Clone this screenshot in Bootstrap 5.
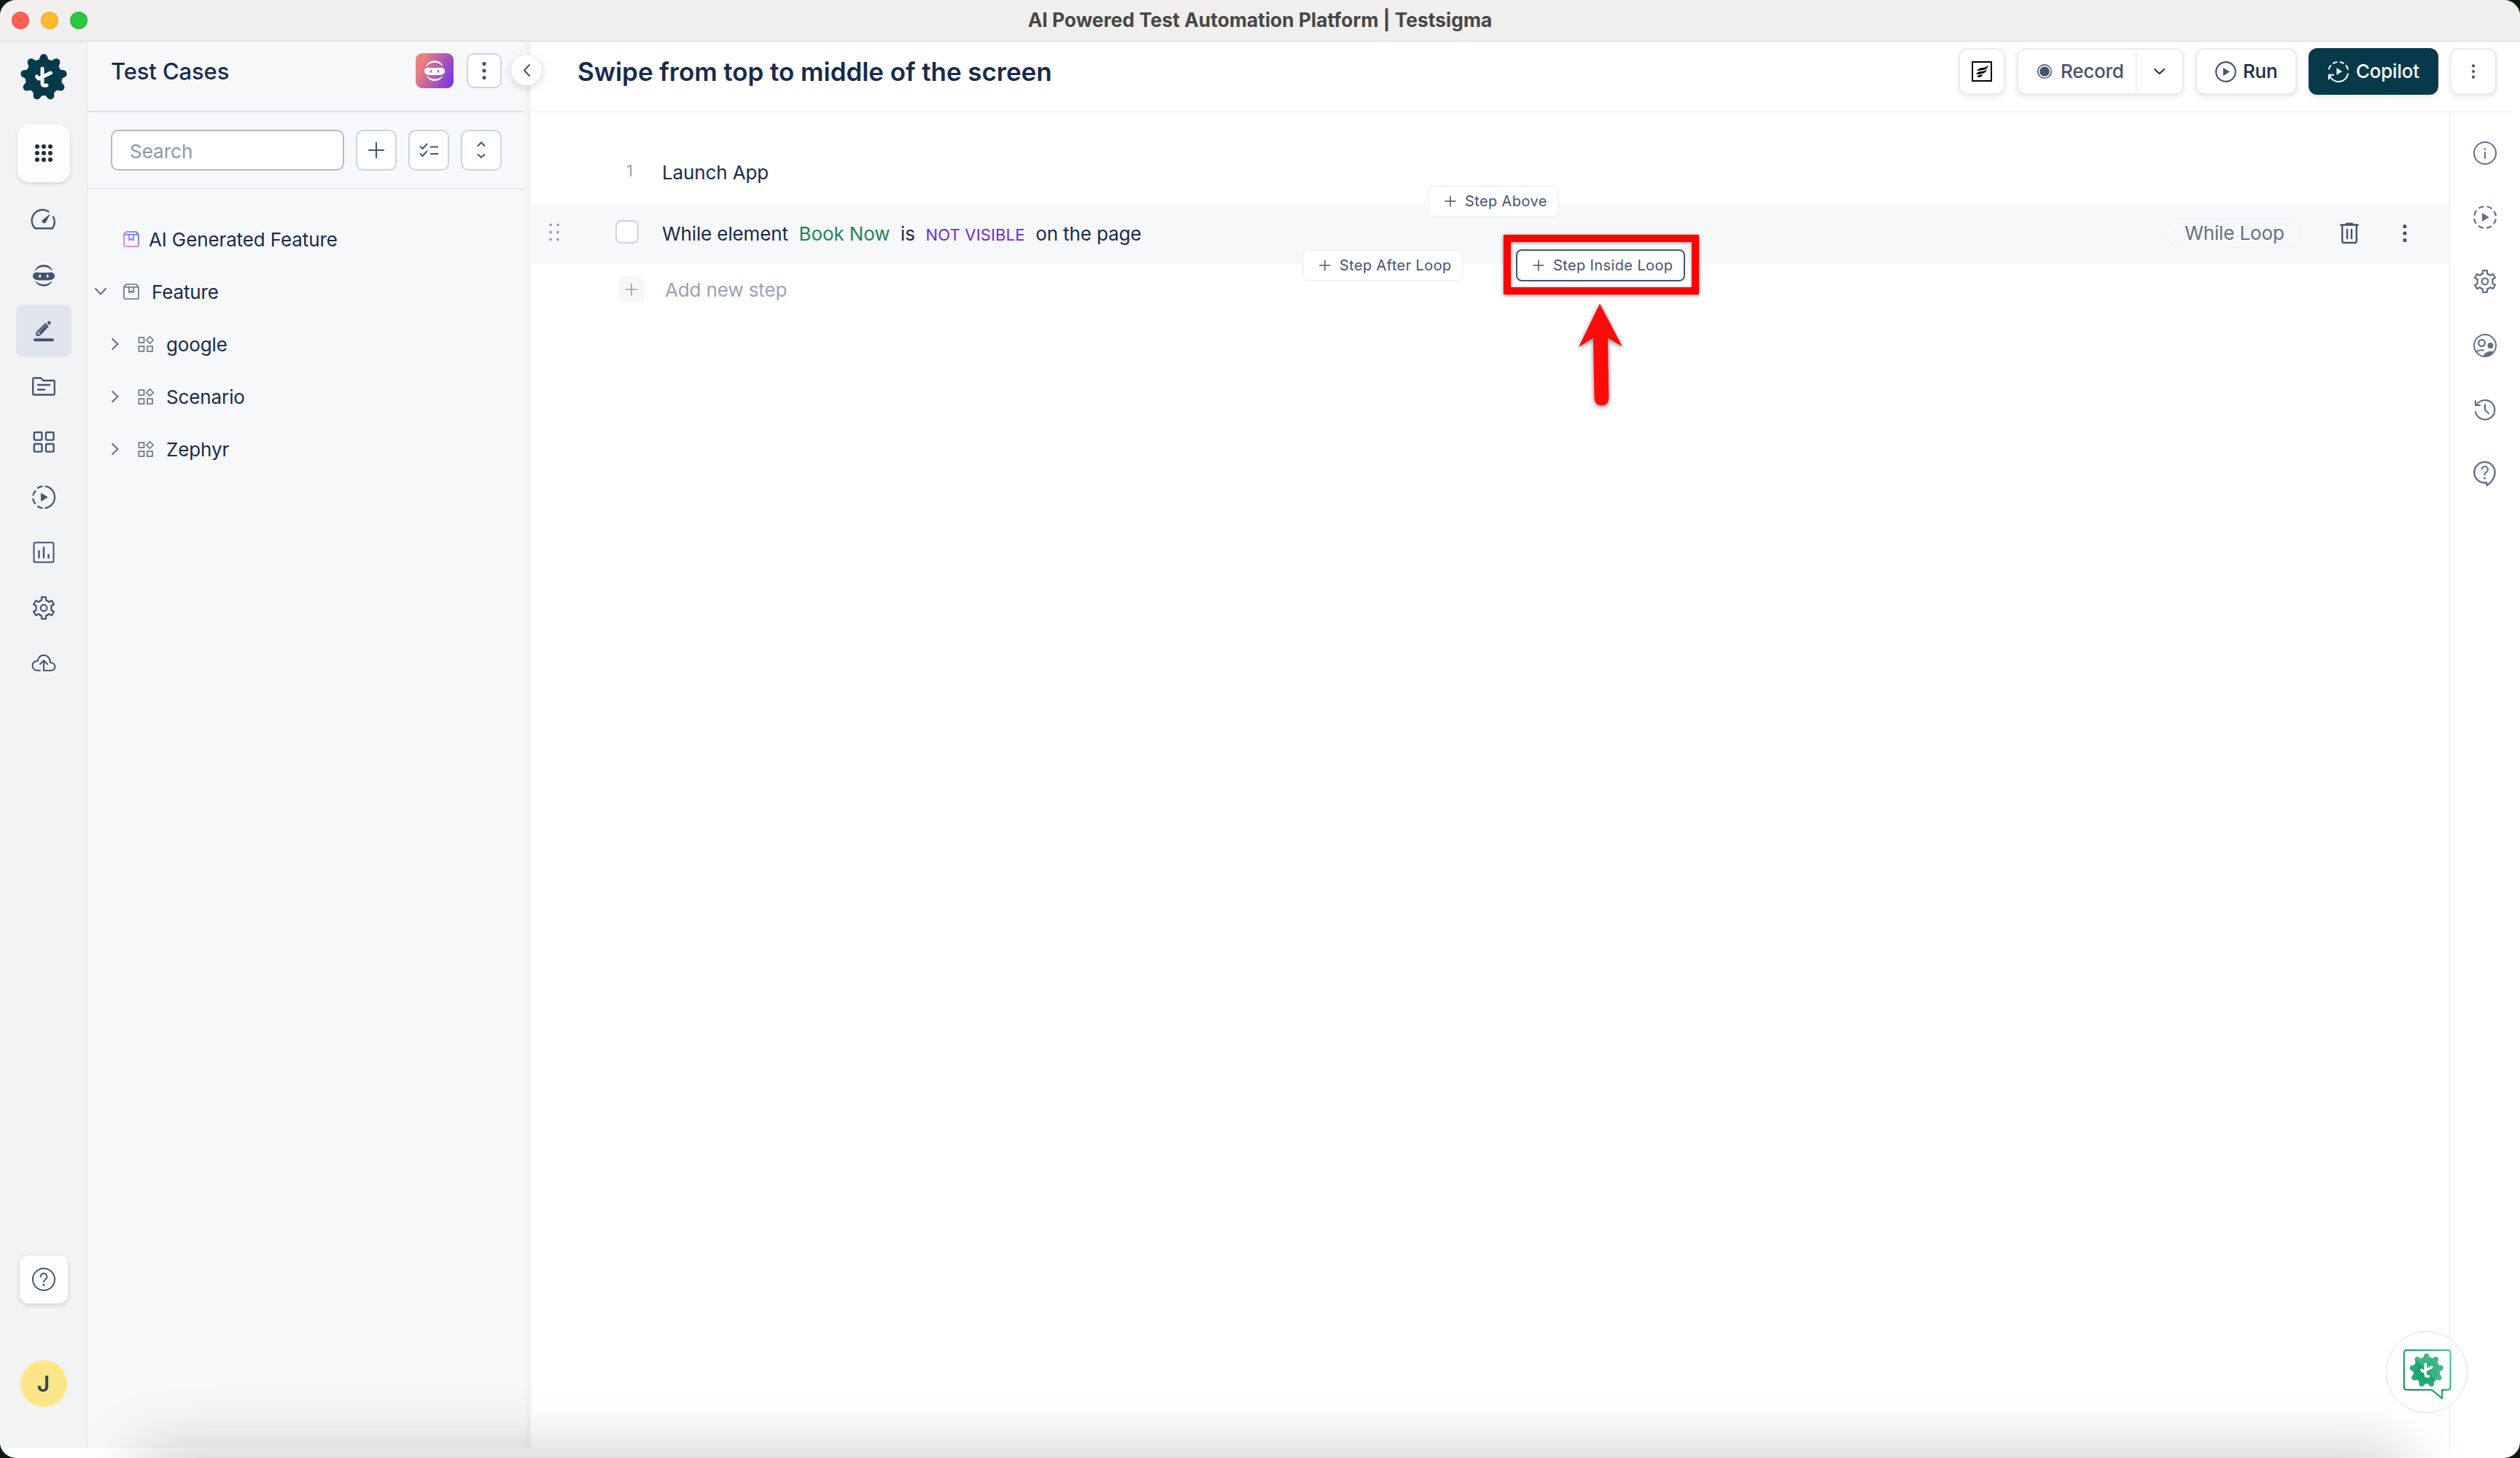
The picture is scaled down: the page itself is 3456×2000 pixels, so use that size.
<!DOCTYPE html>
<html lang="en">
<head>
<meta charset="utf-8">
<title>AI Powered Test Automation Platform | Testsigma</title>
<link href="https://cdn.jsdelivr.net/npm/bootstrap@5.3.0/dist/css/bootstrap.min.css" rel="stylesheet">
<script src="https://cdn.jsdelivr.net/npm/bootstrap@5.3.0/dist/js/bootstrap.bundle.min.js"></script>
<style>
html,body{height:2000px;width:3456px;overflow:hidden}
body{background:#0d1a10;font-family:Inter,"Liberation Sans",sans-serif;font-size:26px;line-height:36px;letter-spacing:-.12px;color:#172b4d}
svg{display:block;flex:none;overflow:visible}
.ln{fill:none;stroke:currentColor;stroke-linecap:round;stroke-linejoin:round}
.ln:not([stroke-width]){stroke-width:2}
.window{width:3456px;height:2000px;border-radius:22px;background:#fff}
.titlebar{height:57px;background:#f0efed;border-bottom:1px solid #d3d3d3;padding-left:16px;gap:16px}
.tl{width:24px;height:24px;border-radius:50%;border:1px solid rgba(0,0,0,.12)}
.tl-close{background:#ff5f57}.tl-min{background:#febc2e}.tl-max{background:#28c840}
.wtitle{left:0;right:0;top:0;line-height:54px;text-align:center;font-weight:700;font-size:26.4px;letter-spacing:0;color:#474747}
.app{height:1929px}
.rail{width:120px;background:#f2f3f5;border-right:1px solid #e3e5e8;color:#44546f;padding-top:17px}
.gridbtn{width:72px;height:80px;border-radius:16px;background:#fcfefd;box-shadow:0 2px 5px rgba(0,0,0,.14);margin:32px 0 14px;color:#222b37}
.ritem{width:76px;height:72px;margin:2px 0;border-radius:10px}
.ritem.on{background:#e0e4ec}
.helpbtn{width:66px;height:66px;border-radius:12px;background:#fcfefd;box-shadow:0 2px 6px rgba(0,0,0,.16);margin-bottom:78px}
.avatar{width:64px;height:64px;border-radius:50%;background:#fde68a;color:#374151;font-weight:600;font-size:30px;margin-bottom:56px}
.side{width:608px;background:#f7f8fa;border-right:8px solid #f2f3f5}
.shead{height:97px;border-bottom:2px solid #e0e3ea;padding:0 32px 15px 32px}
.shead h1{font-size:31px;font-weight:500;margin:0;line-height:40px;padding-top:2px}
.aibtn{width:52px;height:48px;border-radius:9px;background:linear-gradient(115deg,#ec8080 18%,#7a38dd 92%);color:#fff;margin-right:18px}
.sq{width:48px;height:48px;border:2px solid #cbd5e1;border-radius:10px;background:#fff;color:#44546f}
.sq56{width:56px;height:56px}
.stools{height:106px;border-bottom:2px solid #e5e7ea;padding:0 32px;gap:16px}
.search{width:320px;height:56px;border:2px solid #b3b9c4;border-radius:10px;padding:2px 24px 0;font-size:26px;color:#172b4d;background:#fff}
.search::placeholder{color:#8a97ab;opacity:1}
.collapser{left:700px;top:74px;width:44px;height:44px;border-radius:50%;background:#fff;border:1px solid #e5e7eb;box-shadow:0 4px 12px rgba(0,0,0,.12);color:#44546f}
.tree{padding-top:32px;color:#172b4d}
.trow{height:72px}
.trow svg{color:#626f86}
.trow span,.strow .txt{padding-top:2px}
.trow.lvl1{padding-left:33px}
.lvl1 svg+svg{margin-left:26px}
.lvl1 span{margin-left:17px}
.mhead{height:97px;border-bottom:1px solid #e5e7eb;margin-right:12px;padding:0 20px 14px 64px}
.mhead h2{font-size:35px;font-weight:600;margin:0;line-height:44px;letter-spacing:-.06px}
.tb{height:64px;border:2px solid #e9ebf1;border-radius:12px;background:#fff;color:#44546f;font-weight:500;letter-spacing:-.25px;box-shadow:0 3px 7px rgba(20,30,60,.10)}
.tb.dark{background:#063a4a;border-color:#063a4a;color:#fff}
.tb-sq{width:64px}.tb-rec{width:229px}.tb-run{width:139px}.tb-cop{width:178px}
.vsep{width:1px;height:56px;background:#e2e5ec}
.steps{width:2631px;padding-top:40px}
.strow{height:84px}
.strow.hov{background:#f7f8fa}
.num{width:180px;font-size:22px;color:#97a3b5;padding:0 0 4px 131px}
.phrase{margin-left:32px;gap:14.7px}
.elem{color:#1f845a}
.cond{color:#7126d9;font-size:22px;letter-spacing:.15px}
.cb{width:32px;height:32px;border:2px solid #cdd2da;border-radius:8px;background:#fff;margin-bottom:4px}
.addrow{padding:16px 0 0 120px;color:#97a3b5}
.addrow>span+span{margin-left:28px;padding-top:2px}
.addbox{width:36px;height:36px;background:#f7f7f7;border-radius:8px}
.pill{width:185px;height:40px;border:1px solid #f1f3f6;border-radius:20px;color:#626f86;padding-left:2px}
.chip{height:44px;border:2px solid #f2f3f5;border-radius:8px;background:#fff;color:#44546f;font-size:20px;letter-spacing:.38px;white-space:nowrap;padding-left:21px;gap:12px}
.chip.act{border-color:#44546f}
.chip-above{left:1958px;top:254px;width:180px}
.chip-after{left:1786px;top:342px;width:221px}
.chip-inside{left:2079px;top:342px;width:232px}
.redbox{left:2062px;top:322px;width:268px;height:82px;border:10px solid #f00;box-shadow:0 1px 5px rgba(0,0,0,.5),inset 0 1px 4px rgba(0,0,0,.4)}
.redarrow{left:2155px;top:410px;filter:drop-shadow(0 2px 3px rgba(0,0,0,.5))}
.rbar{width:97px;border-left:1px solid #e5e7eb;color:#626f86;padding-top:40px}
.rbar>svg{margin-bottom:56px}
.glow{left:0;right:0;bottom:0;height:140px;overflow:hidden;border-radius:0 0 22px 22px;pointer-events:none}
.glow i{position:absolute;left:200px;right:170px;top:145px;height:60px;box-shadow:0 0 90px 10px rgba(0,0,0,.23)}
.chat{left:3272px;top:1826px}
</style>
</head>
<body>
<svg width="0" height="0" class="position-absolute">
<defs>
<linearGradient id="pk" x1="0" y1="1" x2="1" y2="0"><stop offset="0" stop-color="#ff6be6"/><stop offset=".5" stop-color="#a06bff"/><stop offset="1" stop-color="#2f6bff"/></linearGradient>
<linearGradient id="gr" x1="0" y1="1" x2="1" y2="0"><stop offset="0" stop-color="#0b6b4a"/><stop offset=".5" stop-color="#0c9c68"/><stop offset="1" stop-color="#3fc48c"/></linearGradient>
<linearGradient id="cg" gradientUnits="userSpaceOnUse" x1="36" y1="74" x2="76" y2="34"><stop offset="0" stop-color="#0a6b48"/><stop offset=".5" stop-color="#0e9e68"/><stop offset=".52" stop-color="#2ba877"/><stop offset="1" stop-color="#4cba8c"/></linearGradient>
<g id="cog"><circle cx="32" cy="32" r="25"/><path id="lobe" d="M22.600 8.600C26 8.500 26.200 6.500 26.800 4.500C27.500 1.500 29.500 0 32 0S36.500 1.500 37.200 4.500C37.800 6.500 38 8.500 41.400 8.600L32 32Z"/><use href="#lobe" transform="rotate(40 32 32)"/><use href="#lobe" transform="rotate(80 32 32)"/><use href="#lobe" transform="rotate(120 32 32)"/><use href="#lobe" transform="rotate(160 32 32)"/><use href="#lobe" transform="rotate(200 32 32)"/><use href="#lobe" transform="rotate(240 32 32)"/><use href="#lobe" transform="rotate(280 32 32)"/><use href="#lobe" transform="rotate(320 32 32)"/></g>
<clipPath id="cogclip"><circle cx="32" cy="32" r="31"/></clipPath>
<g id="tmark"><path d="M30 20V40.500Q30 44 36 43M22.500 31L25 34L41.500 26" fill="none" stroke="#fff" stroke-width="5" stroke-linecap="round" stroke-linejoin="round"/></g>
<symbol id="bot" viewBox="0 0 32 32"><path d="M3.500 10C5.500 4.500 10 1.300 16 1.300S26.500 4.500 28.500 10Q23 4 16 4T3.500 10ZM4 22.800Q9 28 16 28T28 22.800C26 27.700 22 30.700 16 30.700S6 27.700 4 22.800Z" fill="currentColor"/><path fill-rule="evenodd" fill="currentColor" d="M5.500 11.500Q16 12.500 26.500 11.500Q31 12.500 31 16.500T26 22Q16 23 6 22Q1 20.500 1 16.500T5.500 11.500ZM10.800 14.600a1.400 2.200 0 1 0 .01 0ZM21.200 14.600a1.400 2.200 0 1 0 .01 0Z"/></symbol>
<symbol id="kebab" viewBox="0 0 32 32"><g fill="currentColor"><circle cx="16" cy="6.500" r="2.600"/><circle cx="16" cy="16" r="2.600"/><circle cx="16" cy="25.500" r="2.600"/></g></symbol>
<symbol id="gear" viewBox="0 0 32 32"><path class="ln" stroke-width="2.200" d="M13 1.200h6v4.200a11 11 0 0 1 4.200 2.500L26.800 5.800l3.200 5.200-3.800 2.300a11 11 0 0 1 0 5.400L30 21l-3.200 5.200-3.600-2.100a11 11 0 0 1-4.200 2.500v4.200h-6v-4.200a11 11 0 0 1-4.200-2.500L5.200 26.200 2 21l3.800-2.300a11 11 0 0 1 0-5.400L2 11l3.200-5.200 3.600 2.100A11 11 0 0 1 13 5.400Z"/><circle class="ln" stroke-width="2.200" cx="16" cy="16" r="4.300"/></symbol>
<symbol id="chr" viewBox="0 0 10 16"><path class="ln" d="M1.200 1l7.300 7-7.300 7"/></symbol>
<symbol id="book" viewBox="0 0 22 22"><path fill="none" stroke-width="1.600" stroke-linejoin="round" d="M1 5.500V19.500Q1 21 2.500 21H19.500Q21 21 21 19.500V5.500L18.500 1.500Q18 1 17 1H5Q4 1 3.500 1.500L1 4.800H21M8 5V12.500L11 10.500L14 12.500V5"/></symbol>
<symbol id="mods" viewBox="0 0 22 22"><g fill="none" stroke="currentColor" stroke-width="1.600"><rect x="1.500" y="2" width="7" height="7"/><rect x="1.500" y="14" width="7" height="7"/><rect x="13" y="14" width="7" height="7"/><path d="M16.500 .800l4.700 4.700-4.700 4.700-4.700-4.700Z"/></g></symbol>
<symbol id="plus" viewBox="0 0 16 16"><path d="M8 .500V15.500M.500 8H15.500" stroke="currentColor" stroke-width="1.500"/></symbol>
<symbol id="q" viewBox="0 0 32 32"><path class="ln" d="M11.600 12.300a4.400 4.400 0 1 1 6.700 3.700Q16 17.500 16 19.600"/><circle cx="16" cy="23.500" r="1.600" fill="currentColor"/></symbol>
</defs>
</svg>

<div class="window position-relative overflow-hidden">
  <div class="titlebar d-flex align-items-center">
    <span class="tl tl-close"></span><span class="tl tl-min"></span><span class="tl tl-max"></span>
    <div class="wtitle position-absolute">AI Powered Test Automation Platform | Testsigma</div>
  </div>

  <div class="app d-flex">
    <nav class="rail d-flex flex-column align-items-center flex-shrink-0">
      <svg width="64" height="64" fill="#063a4a"><use href="#cog"/><use href="#tmark"/></svg>
      <div class="gridbtn d-flex align-items-center justify-content-center"><svg width="24" height="24" fill="currentColor"><circle cx="3" cy="3" r="3"/><circle cx="12" cy="3" r="3"/><circle cx="21" cy="3" r="3"/><circle cx="3" cy="12" r="3"/><circle cx="12" cy="12" r="3"/><circle cx="21" cy="12" r="3"/><circle cx="3" cy="21" r="3"/><circle cx="12" cy="21" r="3"/><circle cx="21" cy="21" r="3"/></svg></div>
      <div class="ritem d-flex align-items-center justify-content-center"><svg width="32" height="32"><path class="ln" stroke-width="2.400" d="M22.500 4.200A14.800 14.800 0 0 0 4.200 27.300H27.800A15 15 0 0 0 29 11.500"/><path d="M24 8.500L18 19.500A2.800 2.800 0 0 1 14 16.500Z" fill="currentColor" stroke="currentColor" stroke-linejoin="round"/></svg></div>
      <div class="ritem d-flex align-items-center justify-content-center"><svg width="32" height="32"><use href="#bot"/></svg></div>
      <div class="ritem on d-flex align-items-center justify-content-center"><svg width="32" height="32"><path d="M4 28.300H28" stroke="currentColor" stroke-width="4" stroke-linecap="round"/><path class="ln" stroke-width="2.200" d="M18.300 6.500L21.500 9.700L11 20.800Q9 22.300 6.500 21.700Q6 19 7.500 17ZM18.500 10L10.500 18"/><path fill="currentColor" d="M20.500 4.500L23 2Q25.500 3 26 5L23.800 8Z"/></svg></div>
      <div class="ritem d-flex align-items-center justify-content-center"><svg width="32" height="32"><path class="ln" stroke-width="2.300" d="M1.200 6Q1.200 4.500 3 4.500H12L15.500 8H29Q30.800 8 30.800 9.500V26Q30.800 27.500 29 27.500H3Q1.200 27.500 1.200 26ZM8 14H24M8 20.500H17"/></svg></div>
      <div class="ritem d-flex align-items-center justify-content-center"><svg width="32" height="32"><g class="ln" stroke-width="2.400"><rect x="2.800" y="3" width="10.600" height="10.600" rx="1.500"/><rect x="19" y="3" width="10.600" height="10.600" rx="1.500"/><rect x="2.800" y="19" width="10.600" height="10.600" rx="1.500"/><rect x="19" y="19" width="10.600" height="10.600" rx="1.500"/></g></svg></div>
      <div class="ritem d-flex align-items-center justify-content-center"><svg width="32" height="32"><path class="ln" stroke-width="2.200" d="M18.500 1.200A15 15 0 0 1 18.500 30.800M13.500 1.200A15 15 0 0 0 8 3.300M4.500 7.500A15 15 0 0 0 1.500 13M1.300 18.500A15 15 0 0 0 4 24.500M8 28.700A15 15 0 0 0 13.500 30.800"/><path d="M12.500 10.800V21.200L21 16Z" fill="currentColor" stroke="currentColor" stroke-linejoin="round"/></svg></div>
      <div class="ritem d-flex align-items-center justify-content-center"><svg width="32" height="32"><rect class="ln" x="2.500" y="2.300" width="27" height="27" rx="2"/><path class="ln" stroke-width="2.400" d="M9.500 14V23M16 9V23M22.500 19V23"/></svg></div>
      <div class="ritem d-flex align-items-center justify-content-center"><svg width="32" height="32"><use href="#gear"/></svg></div>
      <div class="ritem d-flex align-items-center justify-content-center"><svg width="32" height="32"><path class="ln" d="M11 25.800H8C3 25.800 .500 22.500 .500 19S3.500 13 8 12.500C8 8 11.500 4.800 16 4.800S25 8.500 25 15C29 15 31.500 17.500 31.500 20.500S29 25.800 26 25.800H16V12.500M11 17L16 12L21 17"/></svg></div>
      <div class="helpbtn mt-auto d-flex align-items-center justify-content-center flex-shrink-0"><svg width="32" height="32"><circle class="ln" cx="16" cy="16" r="15"/><use href="#q"/></svg></div>
      <div class="avatar d-flex align-items-center justify-content-center flex-shrink-0">J</div>
    </nav>

    <aside class="side flex-shrink-0">
      <div class="shead d-flex align-items-center">
        <h1 class="me-auto">Test Cases</h1>
        <div class="aibtn d-flex align-items-center justify-content-center"><svg width="30" height="30"><use href="#bot"/></svg></div>
        <div class="sq d-flex align-items-center justify-content-center"><svg width="32" height="32"><use href="#kebab"/></svg></div>
      </div>
      <div class="stools d-flex align-items-center">
        <input class="search" placeholder="Search">
        <div class="sq sq56 d-flex align-items-center justify-content-center"><svg width="24" height="24"><path stroke="currentColor" stroke-width="2" d="M12 1V23M1 12H23"/></svg></div>
        <div class="sq sq56 d-flex align-items-center justify-content-center"><svg width="26" height="20"><path fill="none" stroke="currentColor" stroke-width="2" d="M1 4.500L4.500 8L11 1M1 14.500L4.500 18L11 11M15 5.500H26M15 15H26"/></svg></div>
        <div class="sq sq56 d-flex align-items-center justify-content-center"><svg width="12" height="24"><path fill="none" stroke="currentColor" stroke-width="2" d="M1 6.500L6 1.500L11 6.500M1 17.500L6 22L11 17.500"/></svg></div>
      </div>
      <div class="tree">
        <div class="trow d-flex align-items-center" style="padding-left:49px"><svg width="22" height="22" stroke="url(#pk)"><use href="#book"/></svg><span style="margin-left:13px">AI Generated Feature</span></div>
        <div class="trow d-flex align-items-center" style="padding-left:10px"><svg width="16" height="10"><path class="ln" d="M1 1l7 7.500 7-7.500"/></svg><svg width="22" height="22" stroke="currentColor" style="margin-left:23px"><use href="#book"/></svg><span style="margin-left:17px">Feature</span></div>
        <div class="trow lvl1 d-flex align-items-center"><svg width="10" height="16"><use href="#chr"/></svg><svg width="22" height="22"><use href="#mods"/></svg><span>google</span></div>
        <div class="trow lvl1 d-flex align-items-center"><svg width="10" height="16"><use href="#chr"/></svg><svg width="22" height="22"><use href="#mods"/></svg><span>Scenario</span></div>
        <div class="trow lvl1 d-flex align-items-center"><svg width="10" height="16"><use href="#chr"/></svg><svg width="22" height="22"><use href="#mods"/></svg><span>Zephyr</span></div>
      </div>
    </aside>

    <main class="flex-grow-1 d-flex flex-column">
      <header class="mhead d-flex align-items-center">
        <h2 class="me-auto">Swipe from top to middle of the screen</h2>
        <div class="d-flex gap-3">
          <div class="tb tb-sq d-flex align-items-center justify-content-center"><svg width="28" height="28"><rect x="1" y="1" width="26" height="26" fill="#fff" stroke="#000" stroke-width="2"/><path d="M7 13Q10 9 15 9T23 5Q22 11 16 12T7 13ZM6 18Q8 14 13 14T21 11Q20 16 14 17T6 18ZM7 21Q9 18.500 15 18Q14 22 10 22Z"/></svg></div>
          <div class="tb tb-rec d-flex align-items-center"><svg width="20" height="20" style="margin:0 12px 0 26px"><circle class="ln" stroke-width="1.500" cx="10" cy="10" r="9.300"/><circle cx="10" cy="10" r="6.800" fill="currentColor"/></svg><span>Record</span><span class="vsep ms-auto"></span><svg width="15" height="8" style="margin:0 24px;color:#172b4d"><path class="ln" d="M1 1l6.500 6L14 1"/></svg></div>
          <div class="tb tb-run d-flex align-items-center"><svg width="29" height="29" style="margin:0 9px 0 25px"><circle class="ln" stroke-width="2.200" cx="14.500" cy="14.500" r="13.300"/><path d="M11 9V20L20 14.500Z" fill="currentColor"/></svg><span style="color:#172b4d">Run</span></div>
          <div class="tb tb-cop dark d-flex align-items-center"><svg width="28" height="28" style="margin:0 10px 0 25px"><path class="ln" d="M1 10.500Q1.500 8 3.500 5.800M7 2.800Q9 1.500 11.500 1.200M16.500 1.200Q19 1.500 21 2.800M24.500 6Q26.200 8 27 11M27 17.500A13 13 0 0 1 2 19.500M1 24.500V18.800H7"/><path d="M11.500 9V19L19 14Z" fill="currentColor"/></svg><span>Copilot</span></div>
          <div class="tb tb-sq d-flex align-items-center justify-content-center"><svg width="26" height="26"><use href="#kebab"/></svg></div>
        </div>
      </header>
      <div class="flex-grow-1 d-flex">
        <section class="steps">
          <div class="strow d-flex align-items-center"><span class="num">1</span><span class="txt">Launch App</span></div>
          <div class="strow hov d-flex align-items-center">
            <svg width="16" height="26" style="margin:0 76px 0 24px" fill="#97a3b5"><circle cx="3" cy="1.500" r="2"/><circle cx="13" cy="1.500" r="2"/><circle cx="3" cy="11.500" r="2"/><circle cx="13" cy="11.500" r="2"/><circle cx="3" cy="21.500" r="2"/><circle cx="13" cy="21.500" r="2"/></svg>
            <span class="cb"></span>
            <span class="txt phrase d-flex align-items-baseline"><span>While element</span><span class="elem">Book Now</span><span>is</span><span class="cond">NOT VISIBLE</span><span>on the page</span></span>
            <span class="pill ms-auto d-flex align-items-center justify-content-center">While Loop</span>
            <svg width="26" height="30" style="margin:0 47px 0 53px;color:#44546f"><path class="ln" stroke-width="2.400" d="M1.200 3.500H24.800M9 1.800H17M3.200 4V25.500Q3.200 28 5.500 28H20.500Q22.800 28 22.800 25.500V4M10 10V22M16 10V22"/></svg>
            <svg width="32" height="32" style="margin-right:45px;color:#44546f"><use href="#kebab"/></svg>
          </div>
          <div class="addrow d-flex align-items-center"><span class="addbox d-flex align-items-center justify-content-center"><svg width="18" height="18"><use href="#plus"/></svg></span><span>Add new step</span></div>
        </section>
        <aside class="rbar d-flex flex-column align-items-center">
          <svg width="32" height="32"><circle class="ln" cx="16" cy="16" r="15"/><path class="ln" d="M16 15V23"/><circle cx="16" cy="10.300" r="1.400" fill="currentColor"/></svg>
          <svg width="32" height="32"><circle cx="16" cy="16" r="15" fill="none" stroke="currentColor" stroke-width="2.200" stroke-dasharray="7.400 4.380" stroke-dashoffset="-2.200"/><path d="M12.500 10.800V21.200L21 16Z" fill="currentColor" stroke="currentColor" stroke-linejoin="round"/></svg>
          <svg width="32" height="32"><use href="#gear"/></svg>
          <svg width="32" height="32"><circle class="ln" cx="16" cy="16" r="15"/><circle class="ln" stroke-width="2.400" cx="11.500" cy="12.500" r="4.400"/><circle cx="23.500" cy="16" r="4" fill="currentColor"/><path class="ln" d="M4.500 24Q9 21.500 14 22.500"/><path d="M14 29Q18 23 27.500 24Q23 31 16 31Z" fill="currentColor"/></svg>
          <svg width="32" height="32"><path class="ln" stroke-width="2.200" d="M3 19A13.300 13.300 0 1 0 4.500 9.500M3 4V10H9M16 9V16.500L21 21"/></svg>
          <svg width="32" height="36"><path class="ln" stroke-width="2.400" d="M18 28A14.200 14.200 0 1 1 29.700 13.500Q29.500 24.500 18.500 32Z"/><path class="ln" d="M11.700 9.300a4.200 4.200 0 1 1 6.600 4Q15.500 15 15.500 17.500"/><circle cx="15.500" cy="22" r="1.600" fill="currentColor"/></svg>
        </aside>
      </div>
    </main>
  </div>

  <div class="collapser position-absolute d-flex align-items-center justify-content-center"><svg width="10" height="17"><path class="ln" d="M9 1L2 8.500 9 16"/></svg></div>
  <div class="chip chip-above position-absolute d-flex align-items-center"><svg width="16" height="16"><use href="#plus"/></svg>Step Above</div>
  <div class="chip chip-after position-absolute d-flex align-items-center"><svg width="16" height="16"><use href="#plus"/></svg>Step After Loop</div>
  <div class="chip chip-inside act position-absolute d-flex align-items-center"><svg width="16" height="16"><use href="#plus"/></svg>Step Inside Loop</div>
  <div class="redbox position-absolute"></div>
  <svg class="redarrow position-absolute" width="80" height="150"><path d="M39 6.500L70 65.500L50 53.500L51.300 136Q51 146 41.500 146T31.500 136L30 53.500L10 66Z" fill="#ff0a0a"/></svg>
  <div class="glow position-absolute"><i></i></div>
  <svg class="chat position-absolute" width="112" height="112"><circle cx="56" cy="56" r="55.500" fill="#fcfdfd" stroke="#bdbdbd" stroke-width=".8" stroke-dasharray="2 1.200"/><path d="M29 26H84.500Q88.500 26 88.500 30V76.500Q88.500 80.500 84.500 80.500H77V92L63 80.500H29Q25 80.500 25 76.500V30Q25 26 29 26Z" fill="#fff" stroke="url(#gr)" stroke-width="1.800"/><defs><linearGradient id="cl" gradientUnits="userSpaceOnUse" x1="6" y1="58" x2="58" y2="6"><stop offset="0" stop-color="#0a6b48"/><stop offset=".55" stop-color="#0ea06a"/><stop offset="1" stop-color="#45b98a"/></linearGradient></defs><g transform="translate(32.500 30.500) scale(.73)"><g fill="url(#cl)"><use href="#cog"/></g><path clip-path="url(#cogclip)" d="M8 8L56 56L64 40V0H20Z" fill="#fff" opacity=".14"/><use href="#tmark"/></g></svg>
</div>
</body>
</html>
